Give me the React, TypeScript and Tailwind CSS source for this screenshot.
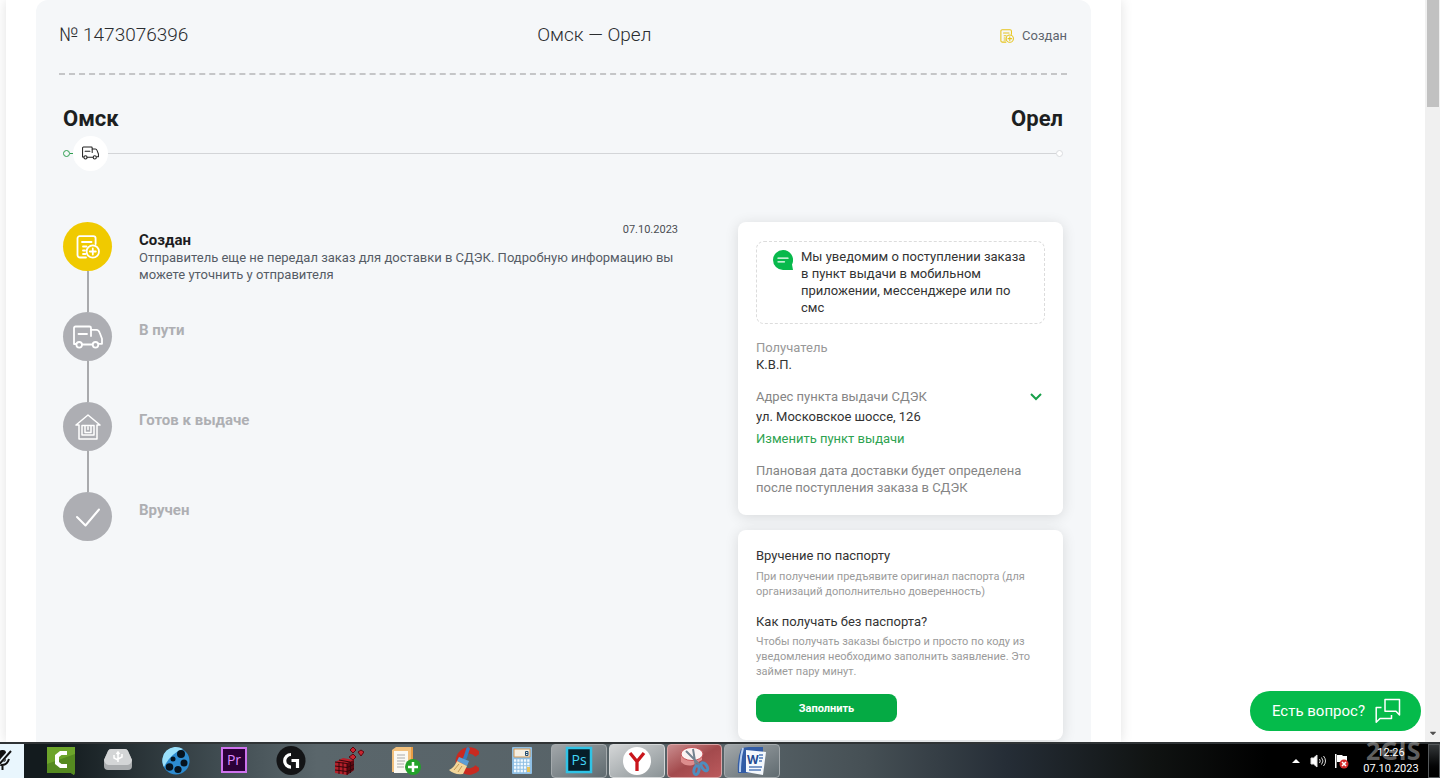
import type { ReactNode } from "react";
import { FaCaretDown } from "react-icons/fa";

type IconProps = { className?: string };

type Step = {
    title: string;
    icon: ReactNode;
    active?: boolean;
    date?: string;
    text?: string;
};

function OrderIcon({ className }: IconProps) {
    return (
        <svg viewBox="0 0 24 24" fill="none" stroke="currentColor" strokeWidth="1.8" strokeLinecap="round" strokeLinejoin="round" className={className}>
            <path d="M10 22.500H4A2.500 2.500 0 0 1 1.500 20V3.500A2.300 2.300 0 0 1 3.800 1.200h13.500a2.300 2.300 0 0 1 2.300 2.300V9" />
            <path d="M6 7h9.500M7 11.500h3.500M7 15.500h2M7 19h2.500" />
            <circle cx="16.800" cy="16.500" r="6.200" />
            <path d="M16.800 13.500v6M13.800 16.500h6" />
        </svg>
    );
}

function TruckIcon({ className }: IconProps) {
    return (
        <svg viewBox="0 0 30 24" fill="none" stroke="currentColor" strokeWidth="1.800" strokeLinecap="round" strokeLinejoin="round" className={className}>
            <path d="M3 19H1V3a1.500 1.500 0 0 1 1.500-1.500h14A1.500 1.500 0 0 1 18 3v8" />
            <path d="M9 19.500h10.500M18 4.800h5.500c1.500 0 2.500 1 3.200 3l2.300 6v5h-3" />
            <path d="M5.500 9h8.500" />
            <circle cx="6.200" cy="19.800" r="2.800" />
            <circle cx="22.500" cy="19.800" r="2.800" />
        </svg>
    );
}

function HouseIcon({ className }: IconProps) {
    return (
        <svg viewBox="0 0 26 26" fill="none" stroke="currentColor" strokeWidth="1.500" strokeLinecap="round" strokeLinejoin="round" className={className}>
            <path d="M4 11v14h18V11M1 11 13 1l12 10M1 11h3M22 11h3" />
            <path d="M7 11.500h12V21H7zM10 12v6.500h6V12M13 13v2.500" />
        </svg>
    );
}

function CheckIcon({ className }: IconProps) {
    return (
        <svg viewBox="0 0 26 20" fill="none" stroke="currentColor" strokeWidth="2" strokeLinecap="round" strokeLinejoin="round" className={className}>
            <path d="m2 10 8.500 8.500L24 2.500" />
        </svg>
    );
}

function MessageIcon({ className }: IconProps) {
    return (
        <svg viewBox="0 0 20 20" className={className}>
            <path d="M10 0a10 10 0 1 0 0 20h10l-1-5.500A10 10 0 0 0 10 0z" fill="#08b94c" />
            <path d="M5 8.200h10M5 11.800h6.500" stroke="#fff" strokeWidth="1.300" strokeLinecap="round" />
        </svg>
    );
}

function ChatIcon({ className }: IconProps) {
    return (
        <svg viewBox="0 0 26 26" fill="none" stroke="currentColor" strokeWidth="1.500" strokeLinejoin="round" className={className}>
            <path d="M10 1.500h14.500V17L21 13.200H10z" />
            <path d="M6.500 9.500H1.200v14.700L5 20.500h11.500V17" />
        </svg>
    );
}

const steps: Step[] = [
    {
        title: "Создан",
        icon: <OrderIcon className="size-6" />,
        active: true,
        date: "07.10.2023",
        text: "Отправитель еще не передал заказ для доставки в СДЭК. Подробную информацию вы можете уточнить у отправителя",
    },
    { title: "В пути", icon: <TruckIcon className="h-6 w-8" /> },
    { title: "Готов к выдаче", icon: <HouseIcon className="size-[26px]" /> },
    { title: "Вручен", icon: <CheckIcon className="h-5 w-7" /> },
];

function Timeline() {
    return (
        <ol className="flex-1">
            {steps.map((step, i) => (
                <li key={step.title} className="flex gap-[27px]">
                    <div className="flex flex-col items-center">
                        <div className={`flex size-[49px] shrink-0 items-center justify-center rounded-full text-white ${step.active ? "bg-[#f0ca00]" : "bg-[#adaeb3]"}`}>
                            {step.icon}
                        </div>
                        {i < steps.length - 1 && <div className="h-[41px] w-0.5 bg-[#a9aaad]" />}
                    </div>
                    <div className="flex-1">
                        <div className="flex h-[27px] items-start justify-between">
                            <h3 className={`pt-[9px] text-[15px] leading-[18px] font-bold ${step.active ? "text-[#1c1c1e]" : "text-[#aeafb3]"}`}>{step.title}</h3>
                            {step.date && <time dateTime="2023-10-07" className="text-[11px] leading-[15px] text-[#4a4d52]">{step.date}</time>}
                        </div>
                        {step.text && <p className="text-[13px] leading-[17px] text-[#555c66]">{step.text}</p>}
                    </div>
                </li>
            ))}
        </ol>
    );
}

function DeliveryCard() {
    return (
        <section className="rounded-lg bg-white px-[18px] py-[19px] text-[13px] leading-[17px] shadow-[0_2px_14px_rgba(0,0,0,0.12)]">
            <div className="flex gap-2 rounded-lg border border-dashed border-[#dcdcdc] pt-1.5 pr-3 pb-[7px] pl-4 text-[#333]">
                <MessageIcon className="mt-0.5 size-5 shrink-0" />
                <p>Мы уведомим о поступлении заказа в пункт выдачи в мобильном приложении, мессенджере или по смс</p>
            </div>
            <p className="mt-[15px] text-[#989898]">Получатель</p>
            <p className="text-[#333]">К.В.П.</p>
            <div className="mt-[15px] flex items-center justify-between text-[#858585]">
                <p>Адрес пункта выдачи СДЭК</p>
                <button type="button" aria-label="Показать адрес" className="pr-[3px] text-[#18a04a]">
                    <svg viewBox="0 0 12 8" fill="none" stroke="currentColor" strokeWidth="2" className="h-2 w-3">
                        <path d="m1 1 5 5 5-5" />
                    </svg>
                </button>
            </div>
            <p className="mt-[3px] text-[#333]">ул. Московское шоссе, 126</p>
            <a href="#pickup" className="mt-[5px] block text-[#2da350]">Изменить пункт выдачи</a>
            <p className="mt-[15px] text-[#858585]">Плановая дата доставки будет определена после поступления заказа в СДЭК</p>
        </section>
    );
}

function PassportCard() {
    return (
        <section className="rounded-lg bg-white px-[18px] py-[18px] text-[11px] leading-[15px] text-[#9b9b9b] shadow-[0_2px_14px_rgba(0,0,0,0.12)]">
            <h3 className="mb-[5px] text-[13px] leading-4 text-[#333]">Вручение по паспорту</h3>
            <p>При получении предъявите оригинал паспорта (для организаций дополнительно доверенность)</p>
            <h3 className="mt-[15px] mb-1 text-[13px] leading-4 text-[#333]">Как получать без паспорта?</h3>
            <p>Чтобы получать заказы быстро и просто по коду из уведомления необходимо заполнить заявление. Это займет пару минут.</p>
            <button type="button" className="mt-[15px] h-7 w-[141px] rounded-lg bg-[#05aa44] text-[11px] font-bold text-white">Заполнить</button>
        </section>
    );
}

function Route() {
    return (
        <div className="px-1 pt-7">
            <div className="flex justify-between text-[22px] leading-8 font-bold text-[#1d1f21]">
                <h2>Омск</h2>
                <h2>Орел</h2>
            </div>
            <div className="mt-px flex items-center">
                <span className="size-[7px] rounded-full border border-[#2f9f50]" />
                <span className="h-px w-[3px] bg-[#2f9f50]" />
                <span className="flex size-[35px] items-center justify-center rounded-full bg-white pb-0.5 text-[#222]">
                    <TruckIcon className="h-[14px] w-[17px]" />
                </span>
                <span className="h-px flex-1 bg-[#d3d5d8]" />
                <span className="size-[7px] rounded-full border border-[#dadcdf] bg-white" />
            </div>
        </div>
    );
}

function OrderPanel() {
    return (
        <main className="w-full max-w-[1115px] bg-white px-[30px] shadow-[0_0_12px_rgba(0,0,0,0.12)]">
            <div className="min-h-full rounded-t-xl bg-[#f5f7f9] pr-6 pl-[23px]">
                <header className="flex h-[75px] items-center justify-between border-b-2 border-dashed border-[#c5c6c8] pb-0.5 text-[19px] font-light text-[#2b2d30]">
                    <h1>№ 1473076396</h1>
                    <p>Омск — Орел</p>
                    <p className="flex items-center gap-2 text-[13px] font-normal text-[#5d646d]">
                        <OrderIcon className="size-[14px] text-[#e6c41a]" />
                        Создан
                    </p>
                </header>
                <Route />
                <div className="flex items-start gap-[60px] px-1 pt-[51px]">
                    <Timeline />
                    <aside className="flex w-[325px] shrink-0 flex-col gap-[15px]">
                        <DeliveryCard />
                        <PassportCard />
                    </aside>
                </div>
            </div>
        </main>
    );
}

const apps: { name: string; open?: string; icon: ReactNode }[] = [
    {
        name: "Camtasia",
        icon: (
            <>
                <path d="M1 1h28v25l-1 3-3-2H1z" fill="#6da52b" />
                <path d="M1 18 29 8v18l-1 3-3-2H1z" fill="#558a20" />
                <path d="M21 5h-7l-5 4v9l5 4h7v-4h-5.500L13 16v-5l2.500-2H21z" fill="#fff" />
            </>
        ),
    },
    {
        name: "USB",
        icon: (
            <>
                <path d="M8 3h14q2 0 3 2l4 9v6q0 4-4 4H5q-4 0-4-4v-6l4-9q1-2 3-2z" fill="#a9acae" />
                <path d="M8 3h14q2 0 3 2l4 9q-1 5-5 5H6q-4 0-5-5l4-9q1-2 3-2z" fill="#d3d5d6" />
                <path d="M15 16V6M15 14l-4-2V9M15 13l4-2V8M13.500 8 15 6l1.500 2" fill="none" stroke="#fff" strokeWidth="1.500" />
            </>
        ),
    },
    {
        name: "Видео",
        icon: (
            <>
                <circle cx="15" cy="15" r="13.500" fill="#2d8bd0" />
                <path d="M3 21A13.500 13.500 0 0 1 22 3Q9 8 3 21z" fill="#9be0fa" />
                <circle cx="20" cy="8" r="4" fill="#06131f" />
                <circle cx="23" cy="17" r="3.500" fill="#06131f" />
                <circle cx="17" cy="23.500" r="3.600" fill="#06131f" />
                <circle cx="8.500" cy="21" r="3.800" fill="#06131f" />
                <circle cx="12" cy="13" r="2.500" fill="#06131f" />
            </>
        ),
    },
    {
        name: "Premiere",
        icon: (
            <>
                <path d="M3 2h24v24H3z" fill="#2b0038" stroke="#ce72ee" strokeWidth="2" />
                <text x="15" y="19" textAnchor="middle" fontSize="14" fill="#df8cff">Pr</text>
            </>
        ),
    },
    {
        name: "Logitech",
        icon: (
            <>
                <circle cx="15" cy="14.500" r="14.500" fill="#131416" />
                <path d="M15 8.500a6.300 6.300 0 1 0 0 12.600M15.500 14.500h6V22" fill="none" stroke="#fff" strokeWidth="3.200" />
            </>
        ),
    },
    {
        name: "Реестр",
        icon: (
            <>
                <path d="m1 16 8-4 11 2v10l-7 5-12-2z" fill="#b5202a" />
                <path d="m13 17 7-3v10l-7 5z" fill="#5c0810" />
                <path d="M1 16l12 1.500V29M5 16v12M9 16.500V28M1 20l12 1.500 7-3M1 24l12 1.500 7-3M16.500 16v11M5 14l11 2" fill="none" stroke="#37050a" />
                <path d="m16 4 3-3 3 3-3 3zM24 6l3-2 3 2-3 4zM15 11l4-3 3 3-3 3z" fill="#c92530" stroke="#5c0810" />
            </>
        ),
    },
    {
        name: "Документы",
        icon: (
            <>
                <path d="M6 1h16v25H6z" fill="#e99c44" />
                <path d="M1 4 5 1h15v25H1z" fill="#f2c07c" />
                <path d="M3 5h14v22H3z" fill="#faf8f2" />
                <path d="M6 9h8M6 12h8M6 15h8M6 18h7M6 21h7" stroke="#aaa" />
                <circle cx="22" cy="21" r="8" fill="#23a22a" />
                <path d="M22 16v10M17 21h10" stroke="#fff" strokeWidth="2.500" />
            </>
        ),
    },
    {
        name: "CCleaner",
        icon: (
            <>
                <path d="M29 9A10.500 10.500 0 1 0 29 21" fill="none" stroke="#c92a20" strokeWidth="6.500" />
                <path d="m16 12 3-9" stroke="#347cbd" strokeWidth="3.500" strokeLinecap="round" />
                <path d="m10 11 10 4-2 5-10-5z" fill="#5c9ed5" />
                <path d="m8 15 10 5-4 8Q5 29 0 24q5-2 8-9z" fill="#f3d69a" />
                <path d="m5 24 5-6M9 26l4-6" stroke="#c49850" />
            </>
        ),
    },
    {
        name: "Калькулятор",
        icon: (
            <>
                <rect x="5" y="1" width="20" height="27" rx="1" fill="#8fbfe4" />
                <path d="M7 3h16v8H7z" fill="#f5efe2" stroke="#d39a58" />
                <path d="M18.500 5.500h2.500v4h-2.500zM18.500 7.500H21" fill="none" stroke="#234d70" />
                <path d="M7 14.500h16M7 18h16M7 21.500h16M7 25h16" stroke="#f2faff" strokeWidth="2.300" strokeDasharray="2.300 1" />
                <path d="M20 21h3v5h-3z" fill="#e8c35a" />
            </>
        ),
    },
    {
        name: "Photoshop",
        open: "border-[#a4aaad] bg-linear-to-br from-[#a2a7aa] to-[#606b70]",
        icon: (
            <>
                <path d="M3 2h24v24H3z" fill="#071e29" stroke="#2fc3e6" strokeWidth="2.500" />
                <text x="15" y="19" textAnchor="middle" fontSize="14" fill="#43d5f5">Ps</text>
            </>
        ),
    },
    {
        name: "Яндекс Браузер",
        open: "border-[#d4d7d8] bg-linear-to-br from-[#d4d6d7] to-[#8b9396]",
        icon: (
            <>
                <circle cx="15" cy="15" r="14" fill="#fff" />
                <path d="m8 7 7 8.500L22 7M15 15v10" fill="none" stroke="#c9151b" strokeWidth="3.300" />
            </>
        ),
    },
    {
        name: "Ножницы",
        open: "border-[#daa5a6] bg-linear-to-br from-[#c98d8f] via-[#a34a4d] to-[#bb5a5d]",
        icon: (
            <>
                <path d="M1 9v7q5 5 12 3l9-5V7z" fill="#dd8d8d" />
                <ellipse cx="12" cy="8" rx="11" ry="6.500" fill="#fbf2f2" stroke="#c7555a" />
                <path d="m6 5 15 15M13 3l3 18" stroke="#73828f" strokeWidth="2" />
                <ellipse cx="16.500" cy="24" rx="2.500" ry="4.500" fill="none" stroke="#4f8dbd" strokeWidth="3" transform="rotate(12 16 24)" />
                <ellipse cx="24.500" cy="21" rx="2.500" ry="4.500" fill="none" stroke="#4f8dbd" strokeWidth="3" transform="rotate(-35 24 21)" />
            </>
        ),
    },
    {
        name: "Word",
        open: "border-[#a4aaad] bg-linear-to-br from-[#a2a7aa] to-[#606b70]",
        icon: (
            <>
                <path d="M4 3q3-2 8-2h14v26H1Q0 13 4 3z" fill="#325ca6" />
                <path d="M6 2Q3 12 3 26" fill="none" stroke="#b7cff1" strokeWidth="2" />
                <path d="m9 4 20 2-3 23-17-3z" fill="#f4f8fd" />
                <text x="10" y="18" fontSize="12" fontWeight="bold" fill="#244b93">W</text>
                <path d="M22 9h4M22 12h4M22 15h3M12 21h13M12 24h12" stroke="#537bb9" strokeWidth="1.500" />
            </>
        ),
    },
];

function Taskbar() {
    return (
        <footer className="flex h-9 shrink-0 border-t-2 border-[#303436] bg-[linear-gradient(90deg,#131b1e_4%,#3f4b50_15%,#5a666b_22%,#566166_52%,#465055_60%,#252d36_70%,#101312_80%,#000_88%)]">
            <button type="button" aria-label="Микрофон" className="w-6 overflow-hidden bg-[#e9f6fd]">
                <svg viewBox="0 0 24 34" fill="none" stroke="#111" strokeWidth="2" className="h-full w-6">
                    <rect x="-1" y="6" width="7" height="12" rx="3" fill="#111" stroke="none" />
                    <path d="M-4 15q1 6 6 6t7-6M2.500 21v5" />
                    <path d="M-4 23 11 6" stroke="#e9f6fd" strokeWidth="4" />
                    <path d="M-4 24 11 7" />
                </svg>
            </button>
            <nav className="flex w-[757px] pl-2">
                {apps.map((app) => (
                    <button key={app.name} type="button" aria-label={app.name} className={`mx-px flex flex-1 items-center justify-center rounded-sm border ${app.open ?? "border-transparent"}`}>
                        <svg viewBox="0 0 30 30" className="size-[30px] font-['Open_Sans',sans-serif]">{app.icon}</svg>
                    </button>
                ))}
            </nav>
            <div className="ml-auto flex items-center text-white">
                <svg viewBox="0 0 8 4" className="h-1 w-2"><path d="M0 4 4 0l4 4z" fill="#fff" /></svg>
                <svg viewBox="0 0 16 16" fill="none" stroke="#ddd" className="ml-2.5 size-4">
                    <path d="M1 5h2.500L7 2v12l-3.500-3H1z" fill="#fff" />
                    <path d="M9.500 6q1.500 2 0 4M11.500 4.500q3 3.500 0 7M13.500 3q4 5 0 10" />
                </svg>
                <svg viewBox="0 0 16 16" className="ml-2 size-4">
                    <path d="M1 1h1.500v14H1zM3 2h5l1 1h4v6H3z" fill="#fff" />
                    <circle cx="10" cy="11" r="4.500" fill="#d42a2a" />
                    <path d="m8 9 4 4M12 9l-4 4" stroke="#fff" strokeWidth="1.500" />
                </svg>
                <div className="relative ml-3 flex h-full w-[58px] flex-col justify-center text-center text-[11px] leading-4">
                    <span className="absolute -top-2.5 left-1 font-['Open_Sans',sans-serif] text-[25px] leading-8 font-bold text-[#a0a0a0]/60">2GIS</span>
                    <time className="relative">12:26</time>
                    <time>07.10.2023</time>
                </div>
                <div className="ml-2 h-full w-3 border border-[#55595b] bg-linear-to-b from-[#35393b] to-black" />
            </div>
        </footer>
    );
}

export default function App() {
    return (
        <div className="flex h-screen flex-col overflow-hidden bg-white font-[Roboto,sans-serif]">
            <div className="relative flex min-h-0 flex-1 overflow-hidden">
                <div className="flex min-w-0 flex-1 overflow-hidden pl-1.5">
                    <OrderPanel />
                </div>
                <div className="flex w-[15px] shrink-0 flex-col items-center justify-between bg-[#f0f0f0]">
                    <div className="h-[107px] w-3 bg-[#c1c1c1]" />
                    <FaCaretDown className="mb-1 size-2.5 text-[#505050]" />
                </div>
                <button type="button" className="absolute right-[19px] bottom-[11px] flex h-10 items-center gap-2.5 rounded-full bg-[#05bb4b] pr-5 pl-[22px] text-[15px] text-white">
                    Есть вопрос?
                    <ChatIcon className="size-[26px]" />
                </button>
            </div>
            <Taskbar />
        </div>
    );
}
